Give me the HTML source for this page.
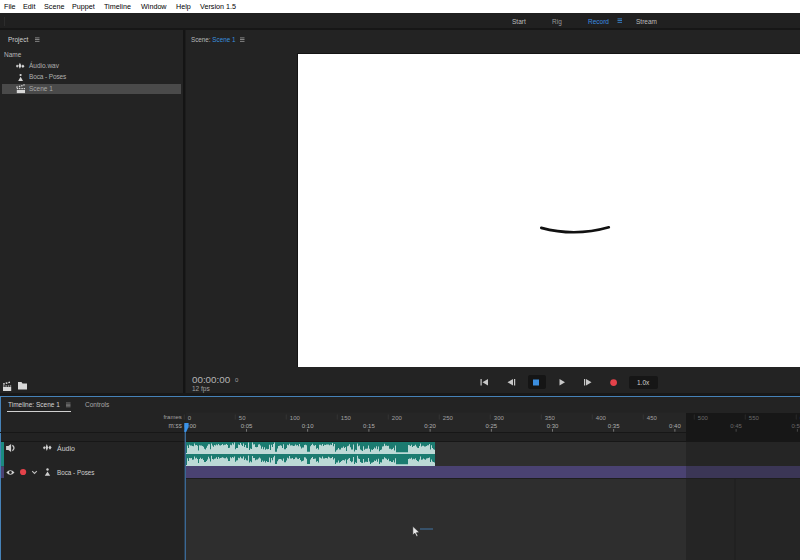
<!DOCTYPE html>
<html><head><meta charset="utf-8">
<style>
*{margin:0;padding:0;box-sizing:border-box}
html,body{width:800px;height:560px;overflow:hidden;background:#232323}
body{position:relative;font-family:"Liberation Sans",sans-serif;color:#c4c4c4}
.a{position:absolute;white-space:nowrap}
.menu{left:0;top:0;width:800px;height:13px;background:#fff}
.menu span{position:absolute;top:2px;font-size:7.2px;color:#000;line-height:9px}
.t{font-size:6.5px;line-height:8px}
svg{position:absolute;left:0;top:0}
</style></head><body>
<!-- menu bar -->
<div class="a menu">
<span style="left:4px">File</span>
<span style="left:23px">Edit</span>
<span style="left:44px">Scene</span>
<span style="left:72px">Puppet</span>
<span style="left:104px">Timeline</span>
<span style="left:141px">Window</span>
<span style="left:176px">Help</span>
<span style="left:200px">Version 1.5</span>
</div>
<!-- top workspace bar -->
<div class="a" style="left:0;top:13px;width:800px;height:15px;background:#202020"></div>
<div class="a" style="left:0;top:28px;width:800px;height:2px;background:#161616"></div>
<div class="a" style="left:4px;top:17px;width:1px;height:9px;background:#2c2c2c"></div>
<div class="a t" style="left:512px;top:17.5px;color:#bdbdbd">Start</div>
<div class="a t" style="left:552px;top:17.5px;color:#999">Rig</div>
<div class="a t" style="left:588px;top:17.5px;color:#3b8ee0">Record</div>
<div class="a t" style="left:636px;top:17.5px;color:#bdbdbd">Stream</div>

<!-- project panel -->
<div class="a t" style="left:8px;top:35.8px;color:#d0d0d0">Project</div>
<div class="a t" style="left:4px;top:50.8px;color:#b8b8b8">Name</div>
<div class="a t" style="left:29px;top:62px;color:#b0b0b0">Áudio.wav</div>
<div class="a t" style="left:29px;top:73.3px;letter-spacing:-0.12px;color:#b0b0b0">Boca - Poses</div>
<div class="a" style="left:2px;top:84px;width:179px;height:10px;background:#4a4a4a"></div>
<div class="a t" style="left:29px;top:85px;color:#a8a8a8">Scene 1</div>

<!-- divider -->
<div class="a" style="left:183px;top:30px;width:2px;height:366px;background:#141414"></div><div class="a" style="left:185px;top:30px;width:1px;height:366px;background:#1c1c1c"></div>

<!-- scene panel -->
<div class="a t" style="left:191px;top:36.2px;font-size:6.3px;color:#b8b8b8">Scene: <span style="color:#3a8fdf">Scene 1</span></div>
<div class="a" style="left:297px;top:53px;width:503px;height:314px;background:#141414"></div><div class="a" style="left:298px;top:54px;width:502px;height:312.5px;background:#fff"></div>
<div class="a" style="left:192px;top:374px;font-size:9.8px;line-height:11px;color:#b4b4b4">00:00:00</div>
<div class="a" style="left:235px;top:377px;font-size:6px;line-height:6px;color:#a0a0a0">0</div>
<div class="a t" style="left:192px;top:384.7px;color:#a0a0a0">12 fps</div>
<div class="a" style="left:528px;top:375px;width:18px;height:14px;background:#151515;border-radius:2px"></div>
<div class="a" style="left:629px;top:376px;width:28.5px;height:12.5px;background:#161616;border-radius:2px"></div>
<div class="a t" style="left:637px;top:379.2px;color:#d0d0d0">1.0x</div>

<!-- gutter -->
<div class="a" style="left:0;top:393px;width:800px;height:3px;background:#181818"></div>

<!-- timeline panel -->
<div class="a" style="left:0;top:396px;width:800px;height:164px;background:#232323;border-top:1px solid #4682b8;border-left:1px solid #4682b8"></div>
<div class="a t" style="left:8px;top:400.8px;color:#d4d4d4">Timeline: Scene 1</div>
<div class="a" style="left:7px;top:411px;width:64px;height:1px;background:#d0d0d0"></div>
<div class="a t" style="left:85px;top:400.8px;color:#a8a8a8">Controls</div>

<svg width="800" height="560" viewBox="0 0 800 560" font-family="Liberation Sans">
<!-- hamburgers -->
<g fill="#9c9c9c">
<rect x="35" y="37.5" width="4.5" height="0.8"/><rect x="35" y="39.2" width="4.5" height="0.8"/><rect x="35" y="40.9" width="4.5" height="0.8"/>
<rect x="240" y="37.5" width="4.5" height="0.8"/><rect x="240" y="39.2" width="4.5" height="0.8"/><rect x="240" y="40.9" width="4.5" height="0.8"/>

</g>
<g fill="#8a8a8a"><rect x="66" y="402.6" width="4.5" height="0.7"/><rect x="66" y="403.9" width="4.5" height="0.7"/><rect x="66" y="405.2" width="4.5" height="0.7"/><rect x="66" y="406.5" width="4.5" height="0.7"/></g>
<g fill="#3b8ee0">
<rect x="617.5" y="18.5" width="4.5" height="0.8"/><rect x="617.5" y="20.2" width="4.5" height="0.8"/><rect x="617.5" y="21.9" width="4.5" height="0.8"/>
</g>
<!-- project icons -->
<g fill="#d8d8d8">
<path d="M16 66 L17.1 64.4 L18.3 66 L17.1 67.8Z M18.4 65.8 L19.9 62.8 L21.4 65.8 L19.9 68.8Z M21.4 66.2 L22.9 64.4 L24.5 66.2 L22.9 68.1Z"/>
<circle cx="20.6" cy="75" r="1.1"/>
<path d="M20.6 76.8 L23 81 L18.2 81Z"/>
<rect x="16.8" y="90" width="8.2" height="3.1"/>
<path d="M16.2 86.6 L17.6 86.3 L17.9 87.6 L16.5 87.9Z M18.7 86 L20.1 85.6 L20.4 86.9 L19 87.3Z M21 85.3 L22.4 84.9 L22.7 86.2 L21.3 86.6Z M23.2 84.4 L24.4 84 L24.7 85.4 L23.5 85.8Z"/>
<rect x="16.8" y="88" width="1.4" height="1.2"/><rect x="19" y="88" width="1.4" height="1.2"/><rect x="21.4" y="88" width="1.4" height="1.2"/><rect x="23.7" y="88" width="1.3" height="1.2"/>
</g>
<!-- bottom project icons -->
<g fill="#d8d8d8">
<rect x="3" y="387" width="8.2" height="4"/>
<path d="M3 383.3 L4.6 382.9 L4.9 384.4 L3.3 384.8Z M5.6 382.6 L7.2 382.2 L7.5 383.7 L5.9 384.1Z M8.2 381.9 L9.8 381.4 L10.1 382.9 L8.5 383.3Z"/>
<rect x="3" y="385.5" width="1.5" height="1"/><rect x="5.4" y="385.5" width="1.5" height="1"/><rect x="7.8" y="385.5" width="1.5" height="1"/><rect x="10" y="385.5" width="1.2" height="1"/>
<path d="M18 382 L21.5 382 L22.5 383.5 L27 383.5 L27 389.5 L18 389.5Z"/>
</g>
<!-- mouth -->
<path d="M541.3 227.9 Q575 236.9 608.8 227.3" stroke="#111" stroke-width="2.7" fill="none" stroke-linecap="round"/>
<!-- transport -->
<g fill="#c8c8c8">
<rect x="480.5" y="379" width="1.2" height="6.5"/><path d="M488 379 L488 385.5 L482.5 382.25Z"/>
<path d="M513 379 L513 385.5 L507.5 382.25Z"/><rect x="514" y="379" width="1.2" height="6.5"/>
<path d="M559.5 379 L559.5 385.5 L565 382.25Z"/>
<rect x="584" y="379" width="1.2" height="6.5"/><path d="M586 379 L586 385.5 L591.5 382.25Z"/>
</g>
<rect x="533" y="379.5" width="6" height="6" fill="#3b8ee0"/>
<circle cx="613.6" cy="382.6" r="3.4" fill="#e4424a"/>

<!-- timeline ruler -->
<rect x="186" y="412.3" width="500" height="19.7" fill="#262626"/>
<rect x="0" y="432" width="686" height="1" fill="#171717"/>
<rect x="1" y="433" width="685" height="8" fill="#222"/>
<rect x="1" y="441" width="685" height="1" fill="#171717"/>
<rect x="686" y="413" width="114" height="29" fill="#171717"/>
<rect x="183.8" y="414.5" width="0.8" height="5" fill="#383838"/>
<text x="187.8" y="419.6" font-size="6" fill="#a0a0a0">0</text>
<rect x="234.8" y="414.5" width="0.8" height="5" fill="#383838"/>
<text x="238.8" y="419.6" font-size="6" fill="#a0a0a0">50</text>
<rect x="285.8" y="414.5" width="0.8" height="5" fill="#383838"/>
<text x="289.8" y="419.6" font-size="6" fill="#a0a0a0">100</text>
<rect x="336.8" y="414.5" width="0.8" height="5" fill="#383838"/>
<text x="340.8" y="419.6" font-size="6" fill="#a0a0a0">150</text>
<rect x="387.8" y="414.5" width="0.8" height="5" fill="#383838"/>
<text x="391.8" y="419.6" font-size="6" fill="#a0a0a0">200</text>
<rect x="438.8" y="414.5" width="0.8" height="5" fill="#383838"/>
<text x="442.8" y="419.6" font-size="6" fill="#a0a0a0">250</text>
<rect x="489.8" y="414.5" width="0.8" height="5" fill="#383838"/>
<text x="493.8" y="419.6" font-size="6" fill="#a0a0a0">300</text>
<rect x="540.8" y="414.5" width="0.8" height="5" fill="#383838"/>
<text x="544.8" y="419.6" font-size="6" fill="#a0a0a0">350</text>
<rect x="591.8" y="414.5" width="0.8" height="5" fill="#383838"/>
<text x="595.8" y="419.6" font-size="6" fill="#a0a0a0">400</text>
<rect x="642.8" y="414.5" width="0.8" height="5" fill="#383838"/>
<text x="646.8" y="419.6" font-size="6" fill="#a0a0a0">450</text>
<rect x="693.8" y="414.5" width="0.8" height="5" fill="#2e2e2e"/>
<text x="697.8" y="419.6" font-size="6" fill="#6a6a6a">500</text>
<rect x="744.8" y="414.5" width="0.8" height="5" fill="#2e2e2e"/>
<text x="748.8" y="419.6" font-size="6" fill="#6a6a6a">550</text>
<rect x="795.8" y="414.5" width="0.8" height="5" fill="#2e2e2e"/>
<text x="799.8" y="419.6" font-size="6" fill="#6a6a6a">600</text>
<text x="184.5" y="427.6" font-size="6" fill="#b0b0b0">0:00</text>
<text x="246.5" y="427.6" font-size="6" fill="#b0b0b0" text-anchor="middle">0:05</text>
<rect x="246.1" y="429" width="0.8" height="2.7" fill="#8a8a8a"/>
<text x="307.7" y="427.6" font-size="6" fill="#b0b0b0" text-anchor="middle">0:10</text>
<rect x="307.3" y="429" width="0.8" height="2.7" fill="#8a8a8a"/>
<text x="368.9" y="427.6" font-size="6" fill="#b0b0b0" text-anchor="middle">0:15</text>
<rect x="368.5" y="429" width="0.8" height="2.7" fill="#8a8a8a"/>
<text x="430.1" y="427.6" font-size="6" fill="#b0b0b0" text-anchor="middle">0:20</text>
<rect x="429.7" y="429" width="0.8" height="2.7" fill="#8a8a8a"/>
<text x="491.3" y="427.6" font-size="6" fill="#b0b0b0" text-anchor="middle">0:25</text>
<rect x="490.9" y="429" width="0.8" height="2.7" fill="#8a8a8a"/>
<text x="552.5" y="427.6" font-size="6" fill="#b0b0b0" text-anchor="middle">0:30</text>
<rect x="552.1" y="429" width="0.8" height="2.7" fill="#8a8a8a"/>
<text x="613.7" y="427.6" font-size="6" fill="#b0b0b0" text-anchor="middle">0:35</text>
<rect x="613.3" y="429" width="0.8" height="2.7" fill="#8a8a8a"/>
<text x="674.9" y="427.6" font-size="6" fill="#b0b0b0" text-anchor="middle">0:40</text>
<rect x="674.5" y="429" width="0.8" height="2.7" fill="#8a8a8a"/>
<text x="736.1" y="427.6" font-size="6" fill="#6a6a6a" text-anchor="middle">0:45</text>
<rect x="735.7" y="429" width="0.8" height="2.7" fill="#555"/>
<text x="797.3" y="427.6" font-size="6" fill="#6a6a6a" text-anchor="middle">0:50</text>
<rect x="796.9" y="429" width="0.8" height="2.7" fill="#555"/>
<text x="181.8" y="419.3" font-size="6" fill="#a0a0a0" text-anchor="end">frames</text>
<text x="181.8" y="428" font-size="6.3" fill="#a8a8a8" text-anchor="end">m:ss</text>
<!-- track areas -->
<rect x="186" y="442" width="500" height="118" fill="#2e2e2e"/>
<rect x="686" y="442" width="114" height="118" fill="#252525"/>
<rect x="734.5" y="479" width="1" height="81" fill="#1e1e1e"/>
<rect x="186" y="466" width="500" height="12" fill="#4a4272"/>
<rect x="686" y="466" width="114" height="12" fill="#3b3656"/>
<rect x="186" y="478" width="614" height="1" fill="#1e1e1e"/>
<!-- audio clip -->
<rect x="186" y="442" width="249" height="24" fill="#1b7b70"/>
<path d="M187 453L187 445.4L188 445.4L188 447.9L189 447.9L189 444.7L190 444.7L190 445.4L191 445.4L191 445.4L192 445.4L192 445.9L193 445.9L193 446.3L194 446.3L194 443.6L195 443.6L195 445.2L196 445.2L196 445.0L197 445.0L197 445.8L198 445.8L198 450.6L199 450.6L199 445.3L200 445.3L200 445.6L201 445.6L201 445.6L202 445.6L202 445.9L203 445.9L203 446.7L204 446.7L204 448.7L205 448.7L205 449.5L206 449.5L206 447.8L207 447.8L207 445.8L208 445.8L208 444.2L209 444.2L209 444.3L210 444.3L210 449.2L211 449.2L211 443.4L212 443.4L212 445.6L213 445.6L213 446.8L214 446.8L214 444.9L215 444.9L215 445.5L216 445.5L216 444.6L217 444.6L217 445.2L218 445.2L218 443.9L219 443.9L219 445.2L220 445.2L220 445.4L221 445.4L221 444.9L222 444.9L222 444.1L223 444.1L223 445.2L224 445.2L224 444.8L225 444.8L225 444.7L226 444.7L226 444.1L227 444.1L227 444.9L228 444.9L228 448.1L229 448.1L229 447.8L230 447.8L230 444.8L231 444.8L231 445.2L232 445.2L232 443.2L233 443.2L233 444.6L234 444.6L234 442.6L235 442.6L235 449.2L236 449.2L236 448.0L237 448.0L237 447.9L238 447.9L238 444.5L239 444.5L239 445.1L240 445.1L240 442.9L241 442.9L241 444.8L242 444.8L242 446.0L243 446.0L243 443.4L244 443.4L244 447.1L245 447.1L245 445.0L246 445.0L246 447.8L247 447.8L247 447.9L248 447.9L248 442.6L249 442.6L249 450.0L250 450.0L250 448.5L251 448.5L251 449.0L252 449.0L252 442.6L253 442.6L253 444.6L254 444.6L254 444.3L255 444.3L255 447.0L256 447.0L256 447.3L257 447.3L257 447.0L258 447.0L258 444.5L259 444.5L259 444.2L260 444.2L260 445.6L261 445.6L261 448.7L262 448.7L262 446.8L263 446.8L263 449.3L264 449.3L264 447.3L265 447.3L265 449.7L266 449.7L266 448.7L267 448.7L267 449.3L268 449.3L268 448.9L269 448.9L269 444.7L270 444.7L270 449.9L271 449.9L271 444.8L272 444.8L272 447.0L273 447.0L273 444.1L274 444.1L274 442.6L275 442.6L275 451.7L276 451.7L276 451.7L277 451.7L277 448.6L278 448.6L278 445.9L279 445.9L279 445.8L280 445.8L280 445.2L281 445.2L281 445.8L282 445.8L282 448.1L283 448.1L283 444.2L284 444.2L284 449.2L285 449.2L285 449.2L286 449.2L286 448.1L287 448.1L287 444.7L288 444.7L288 445.3L289 445.3L289 443.8L290 443.8L290 445.4L291 445.4L291 445.3L292 445.3L292 445.6L293 445.6L293 445.9L294 445.9L294 445.8L295 445.8L295 444.6L296 444.6L296 445.4L297 445.4L297 445.0L298 445.0L298 446.2L299 446.2L299 444.1L300 444.1L300 446.5L301 446.5L301 448.6L302 448.6L302 447.4L303 447.4L303 447.5L304 447.5L304 445.0L305 445.0L305 444.7L306 444.7L306 445.2L307 445.2L307 451.7L308 451.7L308 451.7L309 451.7L309 451.7L310 451.7L310 446.3L311 446.3L311 445.0L312 445.0L312 443.7L313 443.7L313 445.2L314 445.2L314 445.7L315 445.7L315 445.1L316 445.1L316 448.8L317 448.8L317 448.0L318 448.0L318 449.5L319 449.5L319 444.7L320 444.7L320 444.7L321 444.7L321 445.5L322 445.5L322 444.0L323 444.0L323 445.9L324 445.9L324 444.8L325 444.8L325 445.1L326 445.1L326 444.6L327 444.6L327 444.4L328 444.4L328 444.4L329 444.4L329 445.3L330 445.3L330 444.4L331 444.4L331 444.9L332 444.9L332 443.1L333 443.1L333 446.2L334 446.2L334 444.0L335 444.0L335 451.7L336 451.7L336 450.2L337 450.2L337 449.6L338 449.6L338 447.9L339 447.9L339 449.5L340 449.5L340 449.6L341 449.6L341 447.8L342 447.8L342 447.8L343 447.8L343 446.4L344 446.4L344 447.9L345 447.9L345 446.9L346 446.9L346 451.1L347 451.1L347 446.3L348 446.3L348 445.7L349 445.7L349 444.3L350 444.3L350 447.2L351 447.2L351 449.4L352 449.4L352 449.4L353 449.4L353 444.5L354 444.5L354 451.4L355 451.4L355 449.8L356 449.8L356 450.0L357 450.0L357 443.5L358 443.5L358 446.2L359 446.2L359 445.6L360 445.6L360 449.6L361 449.6L361 450.3L362 450.3L362 451.0L363 451.0L363 446.3L364 446.3L364 449.7L365 449.7L365 448.8L366 448.8L366 448.7L367 448.7L367 448.6L368 448.6L368 445.5L369 445.5L369 448.7L370 448.7L370 451.7L371 451.7L371 449.5L372 449.5L372 449.9L373 449.9L373 449.1L374 449.1L374 447.6L375 447.6L375 448.5L376 448.5L376 446.3L377 446.3L377 449.3L378 449.3L378 446.4L379 446.4L379 451.2L380 451.2L380 450.0L381 450.0L381 449.6L382 449.6L382 446.4L383 446.4L383 446.2L384 446.2L384 443.7L385 443.7L385 445.7L386 445.7L386 445.6L387 445.6L387 445.9L388 445.9L388 445.8L389 445.8L389 448.8L390 448.8L390 448.8L391 448.8L391 449.4L392 449.4L392 449.1L393 449.1L393 447.8L394 447.8L394 450.4L395 450.4L395 445.6L396 445.6L396 452.2L397 452.2L397 452.2L398 452.2L398 452.2L399 452.2L399 452.2L400 452.2L400 452.2L401 452.2L401 452.2L402 452.2L402 452.2L403 452.2L403 452.2L404 452.2L404 452.2L405 452.2L405 452.2L406 452.2L406 452.2L407 452.2L407 452.2L408 452.2L408 445.1L409 445.1L409 445.2L410 445.2L410 446.1L411 446.1L411 444.8L412 444.8L412 447.0L413 447.0L413 446.0L414 446.0L414 445.7L415 445.7L415 444.7L416 444.7L416 446.4L417 446.4L417 447.8L418 447.8L418 448.1L419 448.1L419 446.0L420 446.0L420 443.5L421 443.5L421 446.5L422 446.5L422 445.8L423 445.8L423 445.8L424 445.8L424 446.4L425 446.4L425 446.4L426 446.4L426 445.9L427 445.9L427 445.3L428 445.3L428 445.3L429 445.3L429 443.9L430 443.9L430 449.4L431 449.4L431 445.2L432 445.2L432 448.0L433 448.0L433 449.2L434 449.2L434 449.8L435 449.8L435 453Z" fill="#bcd9d6"/>
<path d="M187 465L187 458.2L188 458.2L188 461.0L189 461.0L189 457.9L190 457.9L190 458.2L191 458.2L191 458.0L192 458.0L192 459.7L193 459.7L193 459.5L194 459.5L194 456.4L195 456.4L195 458.5L196 458.5L196 457.8L197 457.8L197 459.1L198 459.1L198 462.9L199 462.9L199 458.9L200 458.9L200 457.8L201 457.8L201 459.0L202 459.0L202 458.5L203 458.5L203 460.0L204 460.0L204 462.0L205 462.0L205 462.0L206 462.0L206 461.0L207 461.0L207 459.4L208 459.4L208 456.8L209 456.8L209 458.5L210 458.5L210 461.6L211 461.6L211 455.8L212 455.8L212 458.9L213 458.9L213 459.4L214 459.4L214 458.7L215 458.7L215 458.4L216 458.4L216 457.3L217 457.3L217 459.1L218 459.1L218 456.9L219 456.9L219 458.4L220 458.4L220 457.9L221 457.9L221 457.8L222 457.8L222 457.2L223 457.2L223 457.7L224 457.7L224 458.2L225 458.2L225 458.3L226 458.3L226 457.2L227 457.2L227 458.4L228 458.4L228 461.0L229 461.0L229 461.1L230 461.1L230 457.3L231 457.3L231 458.2L232 458.2L232 457.0L233 457.0L233 457.7L234 457.7L234 456.6L235 456.6L235 461.8L236 461.8L236 460.4L237 460.4L237 460.2L238 460.2L238 457.7L239 457.7L239 458.3L240 458.3L240 456.7L241 456.7L241 458.3L242 458.3L242 458.6L243 458.6L243 456.4L244 456.4L244 459.9L245 459.9L245 458.6L246 458.6L246 460.2L247 460.2L247 460.6L248 460.6L248 455.6L249 455.6L249 462.5L250 462.5L250 461.2L251 461.2L251 462.2L252 462.2L252 456.1L253 456.1L253 458.1L254 458.1L254 458.1L255 458.1L255 460.3L256 460.3L256 459.5L257 459.5L257 459.4L258 459.4L258 458.4L259 458.4L259 457.4L260 457.4L260 458.4L261 458.4L261 462.1L262 462.1L262 460.4L263 460.4L263 461.8L264 461.8L264 460.8L265 460.8L265 462.4L266 462.4L266 460.9L267 460.9L267 461.9L268 461.9L268 462.1L269 462.1L269 457.6L270 457.6L270 462.4L271 462.4L271 458.1L272 458.1L272 460.3L273 460.3L273 457.3L274 457.3L274 455.7L275 455.7L275 463.9L276 463.9L276 463.9L277 463.9L277 461.3L278 461.3L278 459.6L279 459.6L279 459.0L280 459.0L280 458.9L281 458.9L281 459.4L282 459.4L282 460.7L283 460.7L283 458.4L284 458.4L284 462.3L285 462.3L285 462.2L286 462.2L286 460.4L287 460.4L287 457.7L288 457.7L288 458.6L289 458.6L289 455.9L290 455.9L290 458.5L291 458.5L291 458.5L292 458.5L292 458.1L293 458.1L293 459.2L294 459.2L294 458.9L295 458.9L295 457.6L296 457.6L296 457.6L297 457.6L297 458.7L298 458.7L298 459.0L299 459.0L299 458.0L300 458.0L300 460.0L301 460.0L301 461.4L302 461.4L302 461.0L303 461.0L303 460.6L304 460.6L304 457.2L305 457.2L305 457.4L306 457.4L306 458.8L307 458.8L307 463.9L308 463.9L308 463.9L309 463.9L309 463.9L310 463.9L310 459.6L311 459.6L311 457.9L312 457.9L312 456.9L313 456.9L313 458.9L314 458.9L314 458.7L315 458.7L315 458.6L316 458.6L316 461.8L317 461.8L317 461.0L318 461.0L318 462.5L319 462.5L319 457.3L320 457.3L320 457.8L321 457.8L321 458.4L322 458.4L322 456.5L323 456.5L323 458.6L324 458.6L324 458.4L325 458.4L325 458.1L326 458.1L326 457.9L327 457.9L327 458.4L328 458.4L328 456.8L329 456.8L329 457.5L330 457.5L330 458.3L331 458.3L331 458.1L332 458.1L332 456.9L333 456.9L333 459.6L334 459.6L334 458.2L335 458.2L335 463.9L336 463.9L336 462.5L337 462.5L337 462.4L338 462.4L338 460.6L339 460.6L339 462.8L340 462.8L340 462.0L341 462.0L341 460.9L342 460.9L342 460.3L343 460.3L343 459.9L344 459.9L344 460.6L345 460.6L345 459.3L346 459.3L346 463.5L347 463.5L347 459.8L348 459.8L348 458.7L349 458.7L349 458.1L350 458.1L350 460.9L351 460.9L351 462.2L352 462.2L352 461.5L353 461.5L353 457.1L354 457.1L354 463.9L355 463.9L355 462.3L356 462.3L356 462.9L357 462.9L357 455.8L358 455.8L358 458.4L359 458.4L359 459.1L360 459.1L360 461.9L361 461.9L361 462.8L362 462.8L362 463.1L363 463.1L363 458.9L364 458.9L364 462.4L365 462.4L365 461.7L366 461.7L366 461.7L367 461.7L367 462.0L368 462.0L368 457.9L369 457.9L369 461.4L370 461.4L370 463.9L371 463.9L371 462.7L372 462.7L372 462.6L373 462.6L373 461.9L374 461.9L374 460.5L375 460.5L375 460.9L376 460.9L376 459.4L377 459.4L377 461.7L378 461.7L378 458.7L379 458.7L379 463.9L380 463.9L380 462.3L381 462.3L381 462.5L382 462.5L382 459.2L383 459.2L383 459.2L384 459.2L384 457.3L385 457.3L385 458.2L386 458.2L386 458.8L387 458.8L387 459.9L388 459.9L388 458.7L389 458.7L389 461.3L390 461.3L390 461.0L391 461.0L391 462.1L392 462.1L392 462.1L393 462.1L393 460.3L394 460.3L394 462.6L395 462.6L395 458.2L396 458.2L396 464.2L397 464.2L397 464.2L398 464.2L398 464.2L399 464.2L399 464.2L400 464.2L400 464.2L401 464.2L401 464.2L402 464.2L402 464.2L403 464.2L403 464.2L404 464.2L404 464.2L405 464.2L405 464.2L406 464.2L406 464.2L407 464.2L407 464.2L408 464.2L408 459.1L409 459.1L409 458.4L410 458.4L410 458.8L411 458.8L411 457.7L412 457.7L412 459.5L413 459.5L413 458.7L414 458.7L414 459.2L415 459.2L415 458.3L416 458.3L416 459.9L417 459.9L417 461.0L418 461.0L418 461.4L419 461.4L419 459.6L420 459.6L420 456.6L421 456.6L421 459.8L422 459.8L422 459.5L423 459.5L423 458.6L424 458.6L424 459.3L425 459.3L425 459.8L426 459.8L426 458.5L427 458.5L427 458.2L428 458.2L428 458.1L429 458.1L429 457.6L430 457.6L430 462.1L431 462.1L431 459.5L432 459.5L432 461.4L433 461.4L433 461.9L434 461.9L434 462.4L435 462.4L435 465Z" fill="#bcd9d6"/>

<rect x="186" y="453" width="249" height="1" fill="#bcd9d6"/>
<rect x="186" y="465" width="249" height="1" fill="#bcd9d6"/>
<!-- track header -->
<rect x="1" y="442" width="3" height="24.5" fill="#1b8b80"/>
<rect x="1" y="466.5" width="3" height="11.5" fill="#4a4272"/>
<g fill="#d0d0d0">
<path d="M6.1 446 L8.3 446 L11.1 444.1 L11.1 451.9 L8.3 450 L6.1 450Z"/>
<path d="M12.4 445.3 Q15.6 448 12.4 450.7" stroke="#c8c8c8" stroke-width="1.3" fill="none"/>
<path d="M43 447.7 L44.2 445.9 L45.5 447.7 L44.2 449.5Z M45.5 447.5 L46.8 444 L48.2 447.5 L46.8 451Z M48.4 447.6 L50 445.6 L51.6 447.6 L50 449.7Z"/>
<path d="M6.3 472.5 Q10.4 467.8 14.5 472.5 Q10.4 477.2 6.3 472.5Z"/>
<circle cx="47.5" cy="469.5" r="1.2"/>
<path d="M47.5 471.5 L50.2 475.7 L44.8 475.7Z"/>
</g>
<circle cx="10.4" cy="472.5" r="1.4" fill="#232323"/>
<circle cx="23.1" cy="472" r="3.1" fill="#e4424a"/>
<path d="M32.2 471.1 L34.5 473.4 L36.8 471.1" stroke="#c0c0c0" stroke-width="1.1" fill="none"/>
<text x="57" y="450.5" font-size="7" fill="#d0d0d0">Áudio</text>
<text x="57" y="474.8" font-size="6.3" fill="#d0d0d0">Boca - Poses</text>
<!-- playhead -->
<rect x="184.6" y="430" width="1.4" height="130" fill="#3a6894"/>
<path d="M184.3 423 L188.6 423 L188.6 426.8 L186.2 432 L184.3 432Z" fill="#3b93ea"/>
<!-- cursor -->
<path d="M412.8 526.3 L412.8 535 L414.9 533.2 L416.6 536.6 L418 536 L416.3 532.7 L419.4 532.5Z" fill="#e8e8e8" stroke="#151515" stroke-width="0.5"/>
<rect x="420" y="528" width="13" height="2" fill="#3a5a78" opacity="0.8"/>
</svg>
</body></html>
